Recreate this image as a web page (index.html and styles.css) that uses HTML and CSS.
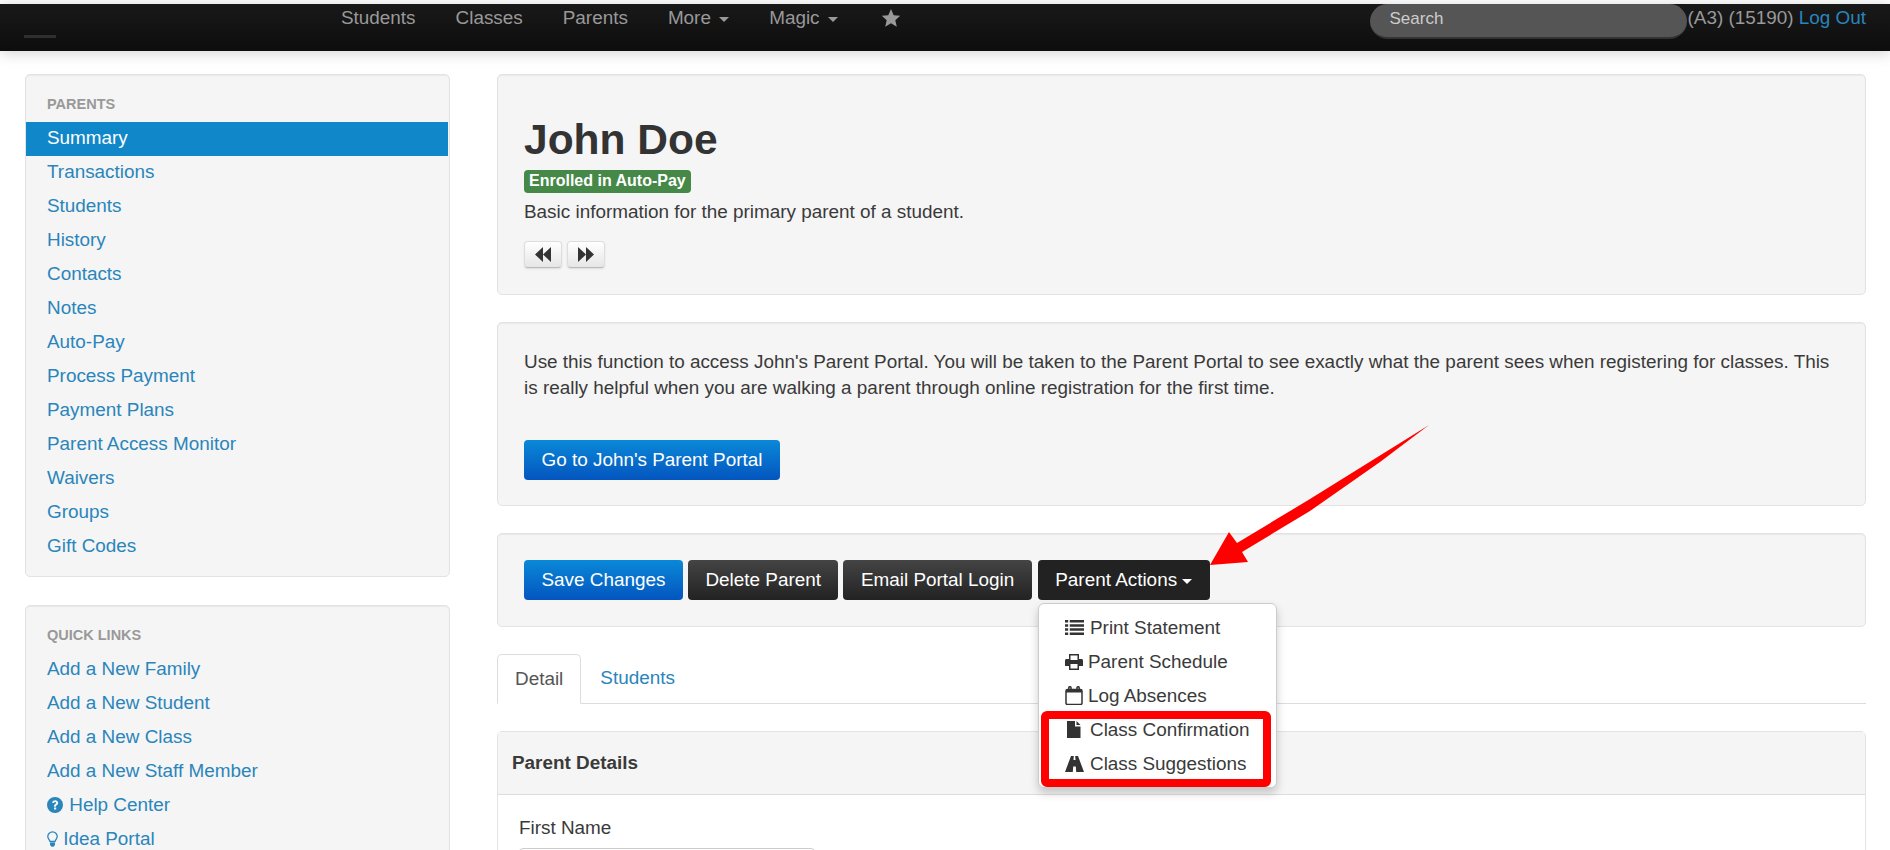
FILE: index.html
```html
<!DOCTYPE html>
<html lang="en">
<head>
  <meta charset="UTF-8" />
  <meta name="viewport" content="width=device-width, initial-scale=1" />
  <title>John Doe - Parents</title>
  <link rel="stylesheet" href="styles.css">
</head>
<body>

  <!-- NAVBAR -->
  <header class="navbar">
    <span class="brand-mark"></span>
    <nav class="nav-links">
      <a href="#">Students</a>
      <a href="#">Classes</a>
      <a href="#">Parents</a>
      <a href="#">More <span class="caret"></span></a>
      <a href="#">Magic <span class="caret"></span></a>
      <a href="#" class="nav-star">
        <svg viewBox="0 0 20 20" width="20" height="20"><path d="M10 1l2.700 6.200 6.500.6-4.900 4.400 1.500 6.600L10 15.200l-5.800 3.600 1.500-6.600L.8 7.800l6.500-.6z"/></svg>
      </a>
    </nav>
    <div class="nav-right">
      <input class="search" type="text" placeholder="Search">
      <span class="user-info">(A3) (15190) <a href="#">Log Out</a></span>
    </div>
  </header>

  <div class="page">

    <!-- SIDEBAR -->
    <aside class="sidebar">
      <div class="well side-well">
        <div class="nav-header">Parents</div>
        <a href="#" class="side-link active">Summary</a>
        <a href="#" class="side-link">Transactions</a>
        <a href="#" class="side-link">Students</a>
        <a href="#" class="side-link">History</a>
        <a href="#" class="side-link">Contacts</a>
        <a href="#" class="side-link">Notes</a>
        <a href="#" class="side-link">Auto-Pay</a>
        <a href="#" class="side-link">Process Payment</a>
        <a href="#" class="side-link">Payment Plans</a>
        <a href="#" class="side-link">Parent Access Monitor</a>
        <a href="#" class="side-link">Waivers</a>
        <a href="#" class="side-link">Groups</a>
        <a href="#" class="side-link">Gift Codes</a>
      </div>
      <div class="well side-well quick">
        <div class="nav-header">Quick Links</div>
        <a href="#" class="side-link">Add a New Family</a>
        <a href="#" class="side-link">Add a New Student</a>
        <a href="#" class="side-link">Add a New Class</a>
        <a href="#" class="side-link">Add a New Staff Member</a>
        <a href="#" class="side-link">
          <svg class="icon" viewBox="0 0 16 16" width="16" height="16"><path fill-rule="evenodd" d="M8 0a8 8 0 1 1 0 16A8 8 0 0 1 8 0zM7 10.400v2.200h2.200v-2.200zM8.200 3.200c-1.700 0-3 .8-3.200 2.600l2 .3c.1-.8.5-1.200 1.100-1.200.6 0 1 .3 1 .9 0 .5-.3.8-.9 1.200-.9.6-1.200 1.200-1.200 2.100v.6h2V9.300c0-.4.2-.6.8-1 .9-.6 1.400-1.200 1.400-2.300 0-1.700-1.300-2.800-3-2.800z"/></svg>
          Help Center
        </a>
        <a href="#" class="side-link">
          <svg class="icon bulb" viewBox="0 0 11 16" width="11" height="16"><path fill="none" stroke="currentColor" stroke-width="1.300" d="M5.500.8a4.700 4.700 0 0 1 4.700 4.700c0 2-1.500 3-2.200 5H3c-.7-2-2.200-3-2.200-5A4.700 4.700 0 0 1 5.500.8z"/><path d="M3 11.500h5v2.500l-1.500 1.800h-2L3 14z"/></svg>
          Idea Portal
        </a>
      </div>
    </aside>

    <!-- MAIN -->
    <main class="content">

      <section class="well title-well">
        <h1>John Doe</h1>
        <span class="badge">Enrolled in Auto-Pay</span>
        <p class="lead">Basic information for the primary parent of a student.</p>
        <div class="pager">
          <button class="btn-mini" type="button">
            <svg viewBox="0 0 16 15" width="16" height="15"><path d="M8 0v15L0 7.500zM16 0v15L8 7.500z"/></svg>
          </button>
          <button class="btn-mini" type="button">
            <svg viewBox="0 0 16 15" width="16" height="15"><path d="M0 0v15l8-7.500zM8 0v15l8-7.500z"/></svg>
          </button>
        </div>
      </section>

      <section class="well portal-well">
        <p class="portal-text">Use this function to access John's Parent Portal. You will be taken to the Parent Portal to see exactly what the parent sees when registering for classes. This is really helpful when you are walking a parent through online registration for the first time.</p>
        <button class="btn btn-primary" type="button">Go to John's Parent Portal</button>
      </section>

      <section class="well actions-well">
        <button class="btn btn-primary" type="button">Save Changes</button>
        <button class="btn btn-dark" type="button">Delete Parent</button>
        <button class="btn btn-dark" type="button">Email Portal Login</button>
        <button class="btn btn-black" type="button">Parent Actions <span class="caret"></span></button>
      </section>

      <div class="tabs">
        <a href="#" class="tab active">Detail</a>
        <a href="#" class="tab">Students</a>
      </div>

      <section class="details">
        <div class="details-head">Parent Details</div>
        <div class="details-body">
          <label for="first-name">First Name</label>
          <input type="text" id="first-name">
        </div>
      </section>

    </main>
  </div>

  <!-- DROPDOWN -->
  <ul class="dropdown">
    <li class="wide-gap">
      <svg viewBox="0 0 18 14" width="19" height="15"><path d="M0 0h3v2.300H0zM4.500 0H18v2.300H4.500zM0 3.900h3v2.300H0zM4.500 3.900H18v2.300H4.500zM0 7.800h3v2.300H0zM4.500 7.800H18v2.300H4.500zM0 11.700h3V14H0zM4.500 11.700H18V14H4.500z"/></svg>
      Print Statement
    </li>
    <li>
      <svg viewBox="0 0 18 16" width="18" height="16"><path fill-rule="evenodd" d="M4 0h10v5h2.500c.8 0 1.500.7 1.500 1.500V12h-4v4H4v-4H0V6.500C0 5.700.7 5 1.500 5H4zM5.500 1.500V6h7V1.500zM5.500 10v4.500h7V10z"/></svg>
      Parent Schedule
    </li>
    <li>
      <svg viewBox="0 0 18 19" width="18" height="19"><path fill="none" stroke="currentColor" stroke-width="1.500" d="M2.500 3.500h13a1.500 1.500 0 0 1 1.500 1.500v12a1.500 1.500 0 0 1-1.500 1.500h-13A1.500 1.500 0 0 1 1 17V5a1.500 1.500 0 0 1 1.500-1.500z"/><path fill="none" stroke="currentColor" stroke-width="1.500" d="M3.800 5V1.800a1.100 1.100 0 0 1 2.200 0V5M12 5V1.800a1.100 1.100 0 0 1 2.200 0V5"/><path d="M1 4h16v2.500H1z"/></svg>
      Log Absences
    </li>
    <li class="file-item">
      <svg viewBox="0 0 14 17" width="14" height="17"><path d="M0 0h8v5.500h5.500V17H0zM9.500 0l4 4h-4z"/></svg>
      Class Confirmation
    </li>
    <li class="wide-gap">
      <svg viewBox="0 0 19 16" width="19" height="16"><path d="M6 0h2.800l-.3 4h2l-.3-4H13l6 16h-7.800l-.4-5.500H8.200L7.800 16H0z"/></svg>
      Class Suggestions
    </li>
  </ul>

  <!-- ANNOTATIONS -->
  <div class="red-box"></div>
  <svg class="arrow" viewBox="0 0 1890 850" width="1890" height="850">
    <path d="M1429 425L1310 499 1237 543 1229 532 1210 565 1248 562 1242 552 1310 511 1380 462z"/>
  </svg>

</body>
</html>
```

FILE: styles.css
```css
/* RESET */
* {
  margin: 0;
  padding: 0;
  box-sizing: border-box;
}

html, body {
  width: 100%;
  height: 850px;
  overflow: hidden;
}

body {
  padding-top: 4px;
  background: #fff;
  color: #3a3a3a;
  font-family: "Liberation Sans", Arial, sans-serif;
  font-size: 18.900px;
}

a {
  text-decoration: none;
  color: #2a85bb;
}

/* NAVBAR */
.navbar {
  display: flex;
  align-items: flex-start;
  height: 47px;
  background: linear-gradient(#191919, #0d0d0d);
  box-shadow: 0 2px 14px rgba(0, 0, 0, 0.18);
}

.brand-mark {
  width: 32px;
  height: 3px;
  margin: 31px 0 0 24px;
  background: #2f2f2f;
}

.nav-links {
  display: flex;
  margin-left: 265px;
}

.nav-links a {
  padding: 3px 20px 0;
  line-height: 22px;
  color: #999;
}

.nav-links .caret {
  margin-left: 3px;
}

.nav-links .nav-star {
  margin-left: 3px;
  padding-top: 4px;
}

.nav-star svg {
  display: block;
  fill: #999;
}

.caret {
  display: inline-block;
  width: 0;
  height: 0;
  margin-left: 0;
  vertical-align: middle;
  border-top: 5px solid currentColor;
  border-left: 5px solid transparent;
  border-right: 5px solid transparent;
}

.nav-right {
  display: flex;
  margin-left: auto;
  margin-right: 24px;
}

.search {
  width: 317px;
  height: 35px;
  padding: 0 0 3px 19px;
  border: none;
  border-bottom: 2px solid #333;
  border-radius: 18px;
  background: #555;
  color: #ccc;
  font: 17px "Liberation Sans", Arial, sans-serif;
}

.search::placeholder {
  color: #ccc;
  opacity: 1;
}

.user-info {
  padding-top: 3px;
  line-height: 22px;
  color: #999;
  white-space: nowrap;
}

/* PAGE */
.page {
  display: grid;
  grid-template-columns: 425px 1369px;
  column-gap: 47px;
  padding: 23px 0 0 25px;
}

.well {
  background: #f5f5f5;
  border: 1px solid #e3e3e3;
  border-radius: 5px;
  box-shadow: inset 0 1px 1px rgba(0, 0, 0, 0.05);
}

/* SIDEBAR */
.side-well {
  padding: 18px 0 12px;
}

.quick {
  margin-top: 28px;
}

.nav-header {
  height: 29px;
  padding-left: 21px;
  line-height: 22px;
  font-size: 14.500px;
  font-weight: bold;
  color: #999;
  text-transform: uppercase;
}

.side-link {
  display: block;
  height: 34px;
  padding-left: 21px;
  line-height: 32px;
}

.side-link.active {
  margin-right: 1px;
  background: #1087c9;
  color: #fff;
}

.icon {
  margin-right: 1px;
  vertical-align: -2px;
  fill: currentColor;
}

.bulb {
  margin-right: 0;
}

/* MAIN */
.content {
  display: flex;
  flex-direction: column;
  gap: 27px;
}

.title-well {
  height: 221px;
  padding: 42px 26px 0;
}

h1 {
  height: 48px;
  font-size: 42.500px;
  line-height: 46px;
  color: #333;
}

.badge {
  display: inline-block;
  height: 23px;
  margin-top: 5px;
  padding: 0 5px;
  border-radius: 4px;
  background: #468847;
  color: #fff;
  font-size: 16px;
  font-weight: bold;
  line-height: 22px;
}

.lead {
  margin-top: 6px;
  line-height: 26px;
}

.pager {
  display: flex;
  gap: 5px;
  margin-top: 16px;
}

.btn-mini {
  display: flex;
  align-items: center;
  justify-content: center;
  width: 38px;
  height: 27px;
  border: 1px solid #ddd;
  border-bottom-color: #bbb;
  border-radius: 4px;
  background: linear-gradient(#fff, #e6e6e6);
  box-shadow: 0 1px 2px rgba(0, 0, 0, 0.1);
}

.btn-mini svg {
  fill: #333;
}

.portal-well {
  height: 184px;
  padding: 26px 26px 0;
}

.portal-text {
  line-height: 25.500px;
}

.btn {
  height: 40px;
  padding: 0 17.500px;
  border: none;
  border-radius: 4px;
  color: #fff;
  font: 18.900px "Liberation Sans", Arial, sans-serif;
}

.btn-primary {
  background: linear-gradient(#0a88d8, #0455bf);
}

.btn-dark {
  background: linear-gradient(#444, #222);
}

.btn-black {
  margin-left: 1px;
  background: #222;
}

.portal-well .btn {
  margin-top: 40px;
}

.actions-well {
  display: flex;
  gap: 5px;
  height: 94px;
  padding: 26px 26px 0;
}

/* TABS */
.tabs {
  display: flex;
  height: 50px;
  border-bottom: 1px solid #ddd;
}

.tab {
  height: 50px;
  padding: 0 17px;
  line-height: 48px;
}

.tab + .tab {
  margin-left: 2px;
}

.tab.active {
  border: 1px solid #ddd;
  border-bottom-color: #fff;
  border-radius: 5px 5px 0 0;
  color: #555;
}

/* DETAILS */
.details {
  border: 1px solid #e3e3e3;
  border-radius: 5px 5px 0 0;
}

.details-head {
  height: 63px;
  padding-left: 14px;
  border-bottom: 1px solid #ddd;
  background: #f5f5f5;
  font-weight: bold;
  line-height: 62px;
}

.details-body {
  padding: 20px 0 0 21px;
}

.details-body label {
  display: block;
  line-height: 26px;
}

.details-body input {
  display: block;
  width: 296px;
  height: 40px;
  margin-top: 7px;
  border: 1px solid #ccc;
  border-radius: 4px;
}

/* DROPDOWN */
.dropdown {
  position: absolute;
  top: 603px;
  left: 1038px;
  width: 239px;
  height: 185px;
  padding-top: 6.500px;
  list-style: none;
  background: #fff;
  border: 1px solid #ccc;
  border-radius: 6px;
  box-shadow: 0 5px 10px rgba(0, 0, 0, 0.2);
}

.dropdown li {
  display: flex;
  align-items: center;
  gap: 5px;
  height: 34px;
  padding-left: 26px;
}

.dropdown li.wide-gap {
  gap: 6px;
}

.dropdown li.file-item {
  gap: 9px;
  padding-left: 28px;
}

.dropdown svg {
  flex: none;
  fill: #333;
  color: #333;
}

/* ANNOTATIONS */
.red-box {
  position: absolute;
  top: 711px;
  left: 1041px;
  width: 230px;
  height: 76px;
  border: 8px solid #f00;
  border-radius: 6px;
}

.arrow {
  position: absolute;
  top: 0;
  left: 0;
  fill: #f00;
}
```
